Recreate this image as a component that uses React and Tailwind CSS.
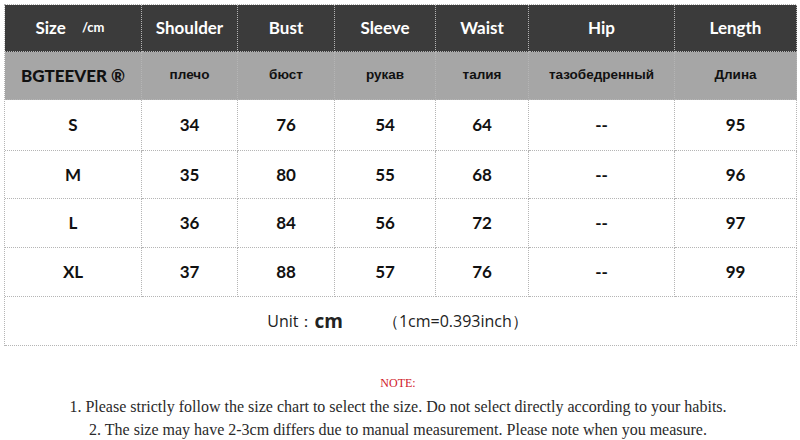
import React from "react";

const cols = ["Shoulder", "Bust", "Sleeve", "Waist", "Hip", "Length"];
const ru = ["плечо", "бюст", "рукав", "талия", "тазобедренный", "Длина"];
const rows = [
  ["S", "34", "76", "54", "64", "--", "95"],
  ["M", "35", "80", "55", "68", "--", "96"],
  ["L", "36", "84", "56", "72", "--", "97"],
  ["XL", "37", "88", "57", "76", "--", "99"],
];

const cell = "flex items-center justify-center border-r border-b border-dotted border-[#b5b5b5]";

const App = () => {
  return (
    <div className="w-[800px] h-[440px] bg-white pt-[4px] pl-[4px]">
      <div className="grid grid-cols-[137px_96px_97px_101px_93px_146px_122px] grid-rows-[47px_48px_51px_48px_49px_49px_49px] w-[792px] border-l border-t border-dotted border-[#b5b5b5] font-['Lato',sans-serif]">
        {/* header */}
        <div className={`${cell} bg-[#3b3b3b] text-white font-bold text-[17px] gap-4 pr-[6px]`}>
          <span>Size</span>
          <span className="text-[13px]">/cm</span>
        </div>
        {cols.map((c) => (
          <div key={c} className={`${cell} bg-[#3b3b3b] text-white font-bold text-[17px]`}>
            {c}
          </div>
        ))}

        {/* brand / russian row */}
        <div className={`${cell} bg-[#a6a6a6] text-[#111] font-black text-[17px]`}>BGTEEVER ®</div>
        {ru.map((r) => (
          <div key={r} className={`${cell} bg-[#a6a6a6] text-[#111] font-bold text-[13.5px] font-['Liberation_Sans',sans-serif]`}>
            {r}
          </div>
        ))}

        {/* sizes */}
        {rows.map((row) =>
          row.map((v, i) => (
            <div key={row[0] + i} className={`${cell} text-[#111] font-bold text-[17px]`}>
              {v}
            </div>
          ))
        )}

        {/* unit */}
        <div className={`${cell} col-span-7 text-[#222] text-[16px] font-['Open_Sans',sans-serif]`}>
          <span className="ml-[-6px]">Unit：</span>
          <span className="font-bold text-[19px]">cm</span>
          <span className="ml-[40px]">（1cm=0.393inch）</span>
        </div>
      </div>

      {/* notes */}
      <div className="flex flex-col items-center font-['Liberation_Serif',serif] text-[#2a2a2a] mt-[29px] pr-[8px]">
        <div className="text-[12px] text-[#d11a2a] leading-[16px]">NOTE:</div>
        <div className="text-[16px] leading-[23px] mt-[4px]">
          1. Please strictly follow the size chart to select the size. Do not select directly according to your habits.
        </div>
        <div className="text-[16px] leading-[23px]">
          2. The size may have 2-3cm differs due to manual measurement. Please note when you measure.
        </div>
      </div>
    </div>
  );
};

export default App;
